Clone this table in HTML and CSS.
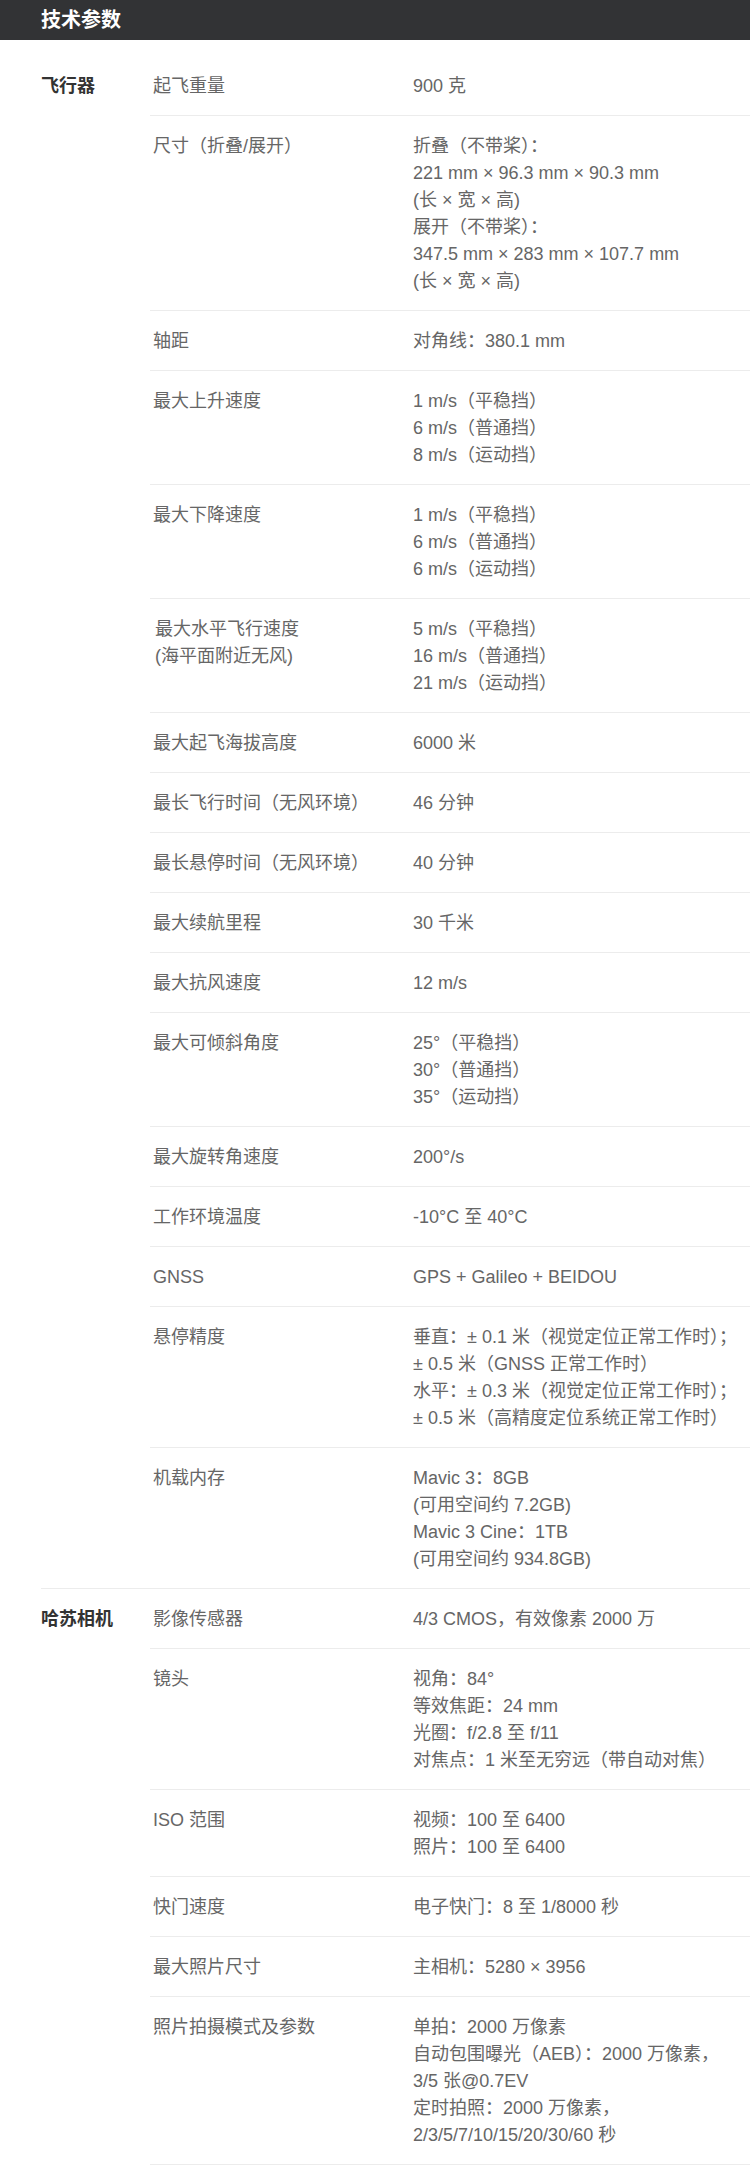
FILE: index.html
```html
<!DOCTYPE html>
<html lang="zh-CN">
<head>
<meta charset="utf-8">
<title>技术参数</title>
<link rel="stylesheet" href="styles.css">
</head>
<body>
<header class="bar"><h1 class="bar-title">技术参数</h1></header>
<main class="specs">
  <section class="group">
    <h2 class="group-name">飞行器</h2>
    <div class="rows">
      <div class="row"><div class="label">起飞重量</div><div class="value">900 克</div></div>
      <div class="row"><div class="label">尺寸（折叠/展开）</div><div class="value">折叠（不带桨）：<br>221 mm × 96.3 mm × 90.3 mm<br>(长 × 宽 × 高)<br>展开（不带桨）：<br>347.5 mm × 283 mm × 107.7 mm<br>(长 × 宽 × 高)</div></div>
      <div class="row"><div class="label">轴距</div><div class="value">对角线：380.1 mm</div></div>
      <div class="row"><div class="label">最大上升速度</div><div class="value">1 m/s（平稳挡）<br>6 m/s（普通挡）<br>8 m/s（运动挡）</div></div>
      <div class="row"><div class="label">最大下降速度</div><div class="value">1 m/s（平稳挡）<br>6 m/s（普通挡）<br>6 m/s（运动挡）</div></div>
      <div class="row"><div class="label label-indent">最大水平飞行速度<br>(海平面附近无风)</div><div class="value">5 m/s（平稳挡）<br>16 m/s（普通挡）<br>21 m/s（运动挡）</div></div>
      <div class="row"><div class="label">最大起飞海拔高度</div><div class="value">6000 米</div></div>
      <div class="row"><div class="label">最长飞行时间（无风环境）</div><div class="value">46 分钟</div></div>
      <div class="row"><div class="label">最长悬停时间（无风环境）</div><div class="value">40 分钟</div></div>
      <div class="row"><div class="label">最大续航里程</div><div class="value">30 千米</div></div>
      <div class="row"><div class="label">最大抗风速度</div><div class="value">12 m/s</div></div>
      <div class="row"><div class="label">最大可倾斜角度</div><div class="value">25°（平稳挡）<br>30°（普通挡）<br>35°（运动挡）</div></div>
      <div class="row"><div class="label">最大旋转角速度</div><div class="value">200°/s</div></div>
      <div class="row"><div class="label">工作环境温度</div><div class="value">-10°C 至 40°C</div></div>
      <div class="row"><div class="label">GNSS</div><div class="value">GPS + Galileo + BEIDOU</div></div>
      <div class="row"><div class="label">悬停精度</div><div class="value">垂直：± 0.1 米（视觉定位正常工作时）；<br>± 0.5 米（GNSS 正常工作时）<br>水平：± 0.3 米（视觉定位正常工作时）；<br>± 0.5 米（高精度定位系统正常工作时）</div></div>
      <div class="row"><div class="label">机载内存</div><div class="value">Mavic 3：8GB<br>(可用空间约 7.2GB)<br>Mavic 3 Cine：1TB<br>(可用空间约 934.8GB)</div></div>
    </div>
  </section>
  <section class="group">
    <h2 class="group-name">哈苏相机</h2>
    <div class="rows">
      <div class="row"><div class="label">影像传感器</div><div class="value">4/3 CMOS，有效像素 2000 万</div></div>
      <div class="row"><div class="label">镜头</div><div class="value">视角：84°<br>等效焦距：24 mm<br>光圈：f/2.8 至 f/11<br>对焦点：1 米至无穷远（带自动对焦）</div></div>
      <div class="row"><div class="label">ISO 范围</div><div class="value">视频：100 至 6400<br>照片：100 至 6400</div></div>
      <div class="row"><div class="label">快门速度</div><div class="value">电子快门：8 至 1/8000 秒</div></div>
      <div class="row"><div class="label">最大照片尺寸</div><div class="value">主相机：5280 × 3956</div></div>
      <div class="row"><div class="label">照片拍摄模式及参数</div><div class="value">单拍：2000 万像素<br>自动包围曝光（AEB）：2000 万像素，<br>3/5 张@0.7EV<br>定时拍照：2000 万像素，<br>2/3/5/7/10/15/20/30/60 秒</div></div>
    </div>
  </section>
</main>
</body>
</html>
```
FILE: styles.css
```css
html, body {
  margin: 0;
  padding: 0;
  background: #ffffff;
}
body {
  font-family: "Liberation Sans", "Noto Sans CJK SC", sans-serif;
  color: #666666;
  font-size: 18px;
  line-height: 27px;
}
.bar {
  height: 40px;
  background: #323335;
  padding-left: 41px;
  display: flex;
  align-items: center;
}
.bar-title {
  margin: 0;
  font-size: 20px;
  line-height: 40px;
  font-weight: bold;
  color: #ffffff;
}
.specs {
  padding-top: 16px;
}
.group {
  margin-left: 41px;
  display: flex;
}
.group + .group {
  border-top: 1px solid #ececec;
}
.group-name {
  margin: 0;
  width: 109px;
  flex: none;
  padding-top: 16.5px;
  font-size: 18px;
  line-height: 27px;
  font-weight: bold;
  color: #333333;
}
.rows {
  flex: 1;
}
.row {
  display: flex;
  padding: 16.5px 0 15.5px;
}
.row + .row {
  border-top: 1px solid #ececec;
}
.group:last-child .row:last-child {
  border-bottom: 1px solid #ececec;
}
.label {
  width: 260px;
  flex: none;
  padding-left: 3px;
}
.label-indent {
  padding-left: 5px;
  width: 258px;
}
.value {
  flex: 1;
  white-space: nowrap;
}
```
